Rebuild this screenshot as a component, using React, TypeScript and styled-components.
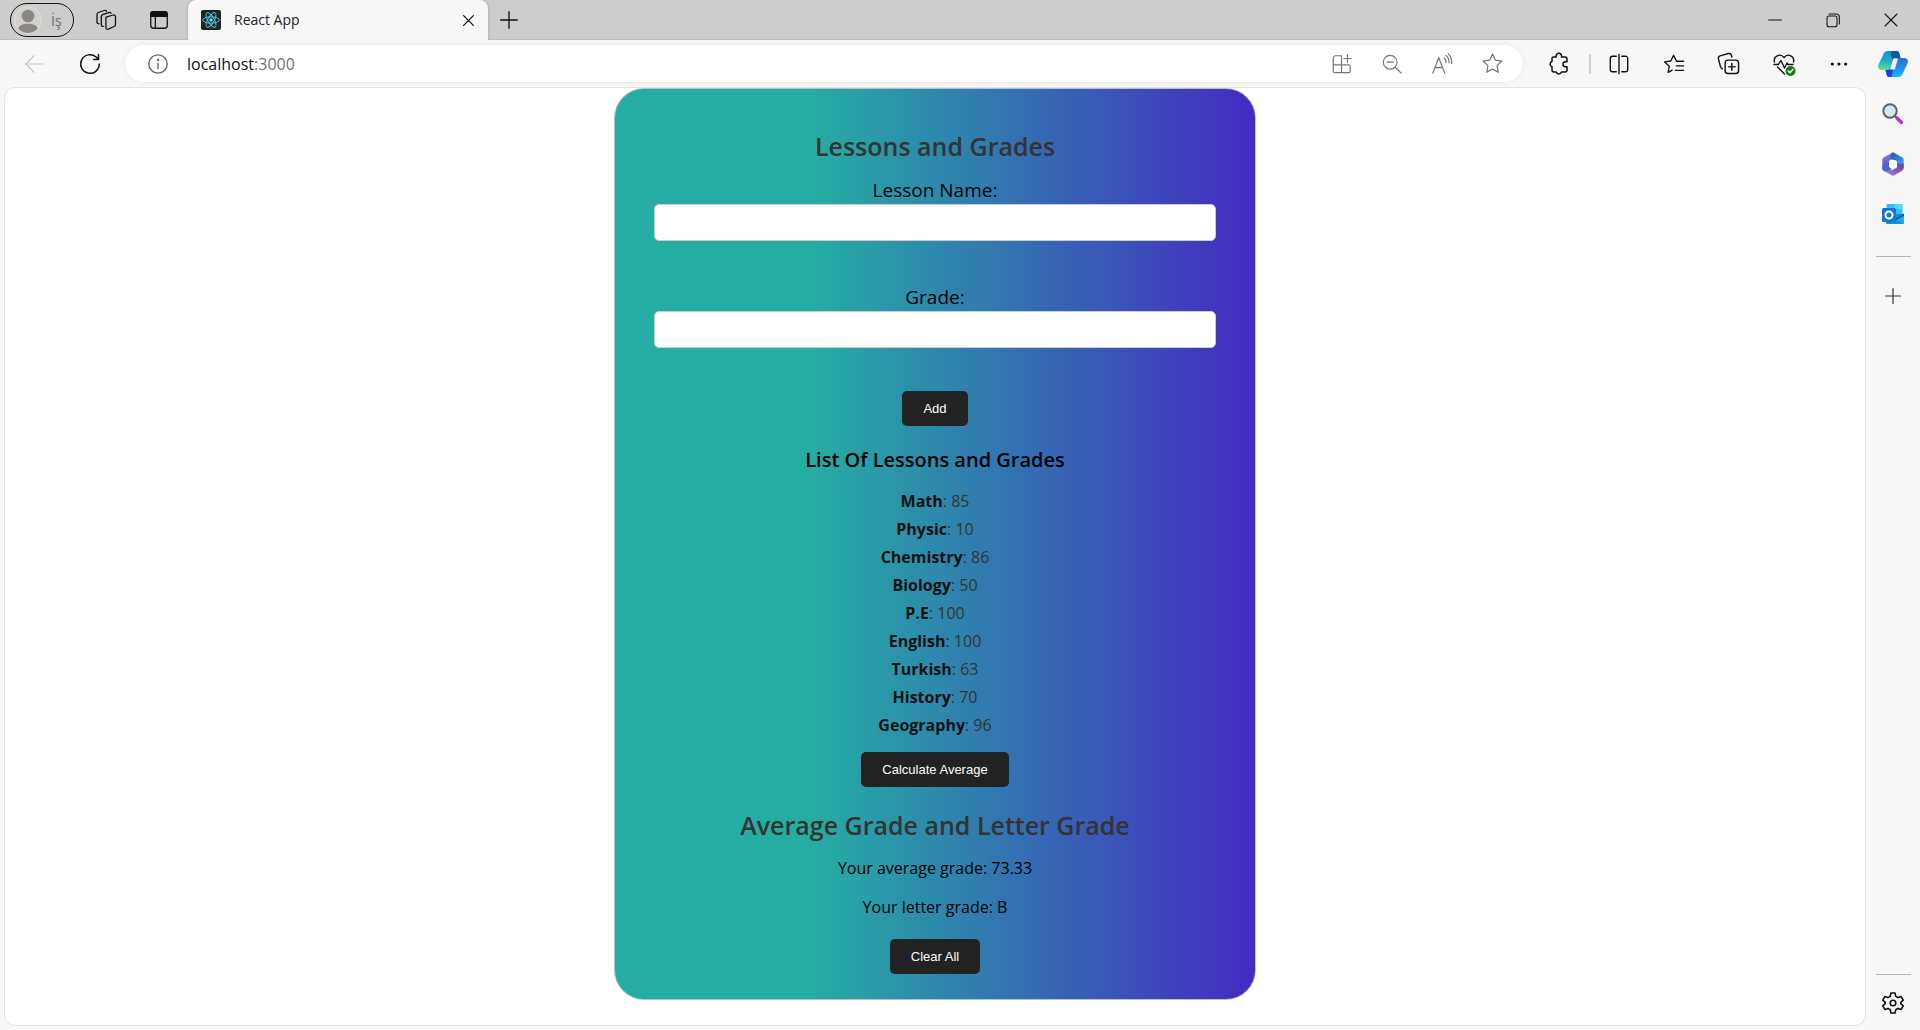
import React, { useState } from "react";
import styled, { createGlobalStyle } from "styled-components";

const uiFont = `"Segoe UI", "Open Sans", "Noto Sans", sans-serif`;
const comicFont = `"Comic Sans MS", "Open Sans", "Noto Sans", sans-serif`;

const GlobalStyle = createGlobalStyle`
  *, *::before, *::after { box-sizing: border-box; }
  body { margin: 0; background: #f7f7f7; font-family: ${uiFont}; }
  svg { display: block; flex: none; }
`;

/* ---------- browser frame ---------- */

const Browser = styled.div`
  min-height: 100vh;
  display: flex;
  flex-direction: column;
`;

const TitleBar = styled.header`
  height: 40px;
  display: flex;
  align-items: center;
  padding-left: 10px;
  background: #cdcdcd;
  box-shadow: inset 0 -1px 0 #bebebe;
`;

const Profile = styled.button`
  width: 64px;
  height: 34px;
  margin-right: 5px;
  padding: 0 0 0 3px;
  display: flex;
  align-items: center;
  gap: 9px;
  border: 1px solid #111;
  border-radius: 17px;
  background: transparent;
  color: #6b6b6b;
  font: 400 14px ${uiFont};
`;

const IconButton = styled.button<{ $w: number; $color?: string }>`
  width: ${(p) => p.$w}px;
  height: 36px;
  padding: 0;
  flex: none;
  display: flex;
  align-items: center;
  justify-content: center;
  border: 0;
  background: transparent;
  color: ${(p) => p.$color ?? "#111"};
`;

const Tab = styled.div`
  width: 300px;
  height: 40px;
  margin-left: 3px;
  padding: 0 5px 0 13px;
  display: flex;
  align-items: center;
  gap: 13px;
  border-radius: 8px 8px 0 0;
  background: #f7f7f7;
  box-shadow: 0 0 3px rgba(0, 0, 0, 0.25);
  clip-path: inset(0 -4px 0 -4px);
`;

const TabTitle = styled.span`
  flex: 1;
  color: #222;
  font-size: 14px;
  line-height: 20px;
`;

const WindowControls = styled.div`
  margin-left: auto;
  display: flex;
`;

const Toolbar = styled.nav`
  height: 47px;
  display: flex;
  align-items: center;
  padding-left: 7px;
  background: #f7f7f7;
`;

const AddressBar = styled.div`
  flex: 1;
  height: 37px;
  margin: 0 8px 0 8px;
  padding: 0 6px 0 8px;
  display: flex;
  align-items: center;
  border-radius: 19px;
  background: #fff;
  box-shadow: 0 0 4px rgba(0, 0, 0, 0.08);
`;

const Address = styled.span`
  flex: 1;
  margin-left: 4px;
  color: #111;
  font-size: 16px;
  line-height: 24px;
`;

const Port = styled.span`
  color: #757575;
`;

const Divider = styled.span`
  width: 2px;
  height: 20px;
  margin-left: 3px;
  background: #cfcfcf;
`;

const Body = styled.div`
  flex: 1;
  display: flex;
`;

const Viewport = styled.main`
  flex: 1;
  margin: 0 0 4px 4px;
  padding-bottom: 25px;
  border: 1px solid #e4e4e4;
  border-radius: 11px;
  background: #fff;
`;

const SideBar = styled.aside`
  width: 54px;
  padding: 2px 0 9px;
  display: flex;
  flex-direction: column;
  align-items: center;
`;

const SideSlot = styled.div`
  height: 50px;
  display: flex;
  align-items: center;
`;

const SideRule = styled.hr<{ $bottom?: boolean }>`
  width: 35px;
  height: 1px;
  margin: ${(p) => (p.$bottom ? "auto 0 10px" : "17px 0 14px")};
  border: 0;
  background: #b5b5b5;
`;

/* ---------- lesson card ---------- */

const Card = styled.section`
  max-width: 642px;
  margin: 0 auto;
  padding: 39px 39px 25px;
  border: 1px solid #bcbfc6;
  border-radius: 30px;
  background: linear-gradient(90deg, #25ada3 31%, #442dc2 98%) border-box;
  color: #000;
  font-family: ${comicFont};
  text-align: center;
`;

const Heading = styled.h2`
  margin: 0 0 13px;
  color: #333;
  font-size: 25px;
  font-weight: 600;
  line-height: 36px;
`;

const SubHeading = styled.h3`
  margin: 20px 0 13px;
  font-size: 20px;
  font-weight: 600;
  line-height: 28px;
`;

const Form = styled.form`
  display: flex;
  flex-direction: column;
  align-items: center;
  gap: 43px;
`;

const Field = styled.div`
  width: 100%;
`;

const Label = styled.label`
  display: block;
  font-size: 19px;
  line-height: 27px;
`;

const TextInput = styled.input`
  display: block;
  width: 100%;
  height: 37px;
  padding: 8px;
  border: 1px solid #ccc;
  border-radius: 5px;
  background: #fff;
  font: 14px "Liberation Sans", Arial, sans-serif;
`;

const Button = styled.button`
  height: 35px;
  padding: 0 21px;
  border: 0;
  border-radius: 5px;
  background: #222;
  color: #fff;
  font: 13px "Liberation Sans", Arial, sans-serif;
`;

const List = styled.ul`
  margin: 0 0 13px;
  padding: 0;
  list-style: none;
`;

const Row = styled.li`
  color: #333;
  font-size: 16px;
  line-height: 28px;
`;

const Lesson = styled.strong`
  color: #111;
  font-weight: 700;
`;

const Result = styled.section`
  margin-top: 20px;
`;

const Line = styled.p<{ $last?: boolean }>`
  margin: 0 0 ${(p) => (p.$last ? 20 : 15)}px;
  font-size: 16px;
  line-height: 24px;
`;

/* ---------- icons ---------- */

const Icon = ({ size = 22, w = 1.3, children }: { size?: number; w?: number; children: React.ReactNode }) => (
  <svg width={size} height={size} viewBox="0 0 24 24" fill="none" stroke="currentColor" strokeWidth={w} strokeLinecap="round" strokeLinejoin="round" aria-hidden="true">
    {children}
  </svg>
);

const Avatar = () => (
  <svg width="28" height="28" viewBox="0 0 28 28" aria-hidden="true">
    <circle cx="14" cy="14" r="13.3" fill="#d3d1ce" stroke="#e2e0dd" />
    <circle cx="14" cy="10" r="6.3" fill="#8b8784" />
    <path d="M4.2 22.5C5 19.5 8.5 17.8 14 17.8s9 1.7 9.8 4.7A13 13 0 0 1 4.2 22.5z" fill="#8b8784" />
  </svg>
);

const Workspaces = () => (
  <Icon size={24} w={1.3}>
    <path d="M12.200 9.200l6.800-2.200c1.300-.4 2.500.4 2.500 1.700v7.800c0 1-.5 1.700-1.400 2l-5.800 2.700c-1.200.4-2.400-.3-2.400-1.600v-8.700c0-.8-.3-1.400.3-1.700z" />
    <path d="M9.300 18.300c-1.300.1-2-.6-2-1.700V8.700c0-1 .5-1.700 1.400-2l6-2.100c1-.3 1.900 0 2.300.7" />
    <path d="M5 15.800c-1.300 0-2-.7-2-1.700V6.500c0-1 .5-1.700 1.400-2l5.800-2c1-.3 1.900 0 2.300.7" />
  </Icon>
);

const TabPanel = () => (
  <Icon size={22} w={1.4}>
    <rect x="3" y="3" width="18" height="18" rx="3" />
    <path d="M3 8V6a3 3 0 0 1 3-3h12a3 3 0 0 1 3 3v2z" fill="currentColor" />
    <path d="M8 8v13" />
  </Icon>
);

const ReactIcon = () => (
  <svg width="20" height="20" viewBox="0 0 20 20" aria-hidden="true">
    <rect width="20" height="20" rx="2" fill="#222" />
    <g fill="none" stroke="#53c1de" strokeWidth="1">
      <ellipse cx="10" cy="10" rx="8.3" ry="3.2" />
      <ellipse cx="10" cy="10" rx="8.3" ry="3.2" transform="rotate(60 10 10)" />
      <ellipse cx="10" cy="10" rx="8.3" ry="3.2" transform="rotate(120 10 10)" />
    </g>
    <circle cx="10" cy="10" r="1.7" fill="#61dafb" />
  </svg>
);

const Cross = ({ size = 13, w = 2.4 }) => (
  <Icon size={size} w={w}><path d="M3 3l18 18M21 3L3 21" /></Icon>
);
const Plus = ({ size = 20, w = 1.6 }) => (
  <Icon size={size} w={w}><path d="M12 2v20M2 12h20" /></Icon>
);
const Minimize = () => <Icon size={14} w={1.8}><path d="M1 12h22" /></Icon>;
const Restore = () => (
  <Icon size={16} w={1.6}>
    <rect x="3" y="6" width="15" height="16" rx="3" />
    <path d="M6 3h11a4.5 4.5 0 0 1 4.5 4.5V18" />
  </Icon>
);
const Back = () => <Icon size={22}><path d="M22 12H2.5M11 3l-9 9 9 9" /></Icon>;
const Reload = () => (
  <Icon size={24} w={1.5}><path d="M21.3 12a9.3 9.3 0 1 1-3.200-7l2.200 2.200M20.500 2.500v5h-5" /></Icon>
);
const Info = () => (
  <Icon size={22} w={1.5}>
    <circle cx="12" cy="12" r="10" />
    <path d="M12 11v6" />
    <circle cx="12" cy="7.5" r=".6" fill="currentColor" />
  </Icon>
);
const Apps = () => (
  <Icon>
    <path d="M11.5 3H5a2.500 2.500 0 0 0-2.500 2.500V20A1.500 1.500 0 0 0 4 21.500h15.500a1.500 1.500 0 0 0 1.500-1.500v-5.500a1.500 1.500 0 0 0-1.500-1.500h-17M11.500 3v18.500M18 2v8M14 6h8" />
  </Icon>
);
const ZoomOut = () => (
  <Icon><circle cx="10" cy="10" r="7.5" /><path d="M15.5 15.5L22 22M6.5 10h7" /></Icon>
);
const ReadAloud = () => (
  <Icon>
    <path d="M2 22L8.500 5 15 22M4.500 16h8M14.500 5.500c1.400 1.400 2 3 2 5M16.500 2.800c2.400 2 3.400 4.500 3.200 8M18.800 1c3 2.700 4.200 6 3.700 10.500" />
  </Icon>
);
const Star = () => (
  <Icon size={23}><path d="M12 2.200l3 6.300 6.800.9-5 4.800 1.200 7-6-3.400-6 3.400 1.200-7-5-4.800 6.800-.9z" /></Icon>
);
const Puzzle = () => (
  <Icon size={24} w={1.5}>
    <path d="M6.500 5H9.200a2.800 2.800 0 1 1 5.300 0H18a2 2 0 0 1 2 2v2.800h-1.500a2.500 2.500 0 1 0 0 5H20V18a2 2 0 0 1-2 2h-3.500a2.800 2.800 0 0 1-5.300 0H7a2 2 0 0 1-2-2v-3.200a2.800 2.800 0 0 1 0-5.300V6.500A1.500 1.500 0 0 1 6.500 5z" />
  </Icon>
);
const Split = () => (
  <Icon w={1.5}><path d="M9 3.500H5A2.500 2.500 0 0 0 2.500 6v12A2.500 2.500 0 0 0 5 20.500h4M15 3.500h4A2.500 2.500 0 0 1 21.500 6v12a2.500 2.500 0 0 1-2.500 2.500h-4M12 1.500v21" /></Icon>
);
const Favorites = () => (
  <Icon w={1.5}>
    <path d="M22.500 9h-7.700L11.500 2.500 8.500 8.700l-6.700 1 5 4.700-1.200 6.800 4.400-2.500M14.500 14h8M13.500 19h9" />
  </Icon>
);
const Collections = () => (
  <Icon size={23} w={1.5}>
    <rect x="8.5" y="8.500" width="14" height="14" rx="3" />
    <path d="M15.500 12v7M12 15.500h7M5.500 17.500c-1-.3-1.500-1-1.800-2L1.500 7.200c-.3-1.500.4-2.800 1.800-3.200l8.500-2.400c1.500-.4 2.800.4 3.200 1.800l.5 2" />
  </Icon>
);
const Heart = () => (
  <Icon size={24} w={1.4}>
    <path d="M2.500 10C1 4.500 8 .5 12 5.500 16 .5 23 4.500 21.500 10M5.500 15l7 7" />
    <path d="M2 12.500h4.500L9 8.500l3.500 7.500 2.500-5 1 1.500h5" />
    <circle cx="18.500" cy="19" r="5" fill="#107c10" stroke="none" />
    <path d="M16.200 19l1.700 1.700 3-3.200" stroke="#fff" />
  </Icon>
);
const Dots = () => (
  <Icon size={20}>
    <g fill="currentColor" stroke="none">
      <circle cx="4" cy="12" r="1.900" /><circle cx="12" cy="12" r="1.900" /><circle cx="20" cy="12" r="1.900" />
    </g>
  </Icon>
);
const Gear = () => (
  <Icon size={24} w={1.6}>
    <circle cx="12" cy="12" r="2.800" />
    <path d="M10 2h4l.7 3.200 2.300 1.400 3.200-1 2 3.500L19.800 11.300v1.400l2.400 2.200-2 3.500-3.200-1-2.300 1.400L14 22h-4l-.7-3.200L7 17.400l-3.200 1-2-3.500 2.400-2.200v-1.400L1.800 9.100l2-3.500 3.200 1 2.300-1.400z" />
  </Icon>
);

const Copilot = () => (
  <svg width="30" height="28" viewBox="0 0 30 28" aria-hidden="true">
    <defs>
      <linearGradient id="cpA" x1="0" y1="0" x2="0" y2="1">
        <stop offset="0" stopColor="#0a93d2" /><stop offset=".5" stopColor="#1fadc4" /><stop offset="1" stopColor="#5fe08c" />
      </linearGradient>
      <linearGradient id="cpB" x1="0" y1="0" x2="0" y2="1">
        <stop offset="0" stopColor="#2e6ade" /><stop offset="1" stopColor="#16b4fb" />
      </linearGradient>
    </defs>
    <path d="M5.500 4C6.300 2 7.700 1 10 1h8c2 0 3 .8 3.400 2.500L22.500 8h-4c-2 0-3.200 1-3.800 3l-2 6c-.6 2-1.900 3-4 3H4c-3 0-4.500-2-3.700-5z" fill="url(#cpA)" />
    <path d="M14 1h4c2 0 3 .8 3.400 2.500L22.500 8h-4c-1.700 0-2.800.7-3.500 2.200L12.500 4z" fill="#0a5c92" />
    <path d="M24.500 24c-.8 2-2.200 3-4.500 3h-8c-2 0-3-.8-3.400-2.500L7.500 20h1.200c2.100 0 3.400-1 4-3l2-6c.6-2 1.800-3 3.800-3H26c3 0 4.500 2 3.700 5z" fill="url(#cpB)" />
    <path d="M7.500 20h1.200c2.100 0 3.400-1 4-3l2.300 3-1.500 7H12c-2 0-3-.8-3.400-2.500z" fill="#1743d6" />
    <path d="M15.500 8.500h4.500l-3.300 11h-5.200c.7-.6 1.100-1.400 1.400-2.500l1.900-6c.2-1 .3-1.800.7-2.500z" fill="#f7fbff" />
  </svg>
);

const SearchColor = () => (
  <svg width="22" height="22" viewBox="0 0 22 22" aria-hidden="true">
    <path d="M13 13l3 3" stroke="#555" strokeWidth="2" />
    <path d="M15 15l4.500 4.500" stroke="#b52ee8" strokeWidth="3.500" strokeLinecap="round" />
    <circle cx="8" cy="8" r="6.700" fill="#cfe8f8" stroke="#616161" strokeWidth="2" />
  </svg>
);

const Microsoft365 = () => (
  <svg width="22" height="24" viewBox="0 0 22 24" aria-hidden="true">
    <defs>
      <linearGradient id="msA" x1="0" y1="0" x2="0" y2="1">
        <stop offset="0" stopColor="#a66fce" /><stop offset="1" stopColor="#4a56c8" />
      </linearGradient>
      <linearGradient id="msB" x1="0" y1="0" x2="1" y2="1">
        <stop offset="0" stopColor="#2456b8" /><stop offset="1" stopColor="#38b6f0" />
      </linearGradient>
      <linearGradient id="msC" x1="0" y1="1" x2="1" y2="0">
        <stop offset="0" stopColor="#a985df" /><stop offset="1" stopColor="#693c94" />
      </linearGradient>
    </defs>
    <path d="M9.500 1L2 5.300C.8 6 .3 7 .3 8v8c0 1.500.5 2.200 1.700 3l5 .5V9l5-4z" fill="url(#msA)" />
    <path d="M9.500 1C10.500.4 11.500.4 12.500 1L20 5.300c1.200.7 1.700 1.700 1.700 2.700v8L15 12.500V9L8 7z" fill="url(#msB)" />
    <path d="M2 19l7.500 4.200c1 .6 2 .6 3 0L20 18.700c1.200-.7 1.700-1.700 1.700-2.700v-4.500L15 12v3.500l-5 2.500z" fill="url(#msC)" />
    <path d="M.3 14v2c0 2 1.200 3 3 3 2 .2 4-.4 6.500-2L7 15V9z" fill="#4668d0" />
    <circle cx="11" cy="12" r="4" fill="#fff" />
  </svg>
);

const Outlook = () => (
  <svg width="22" height="22" viewBox="0 0 22 22" aria-hidden="true">
    <rect x="4.500" y="1" width="16" height="12" rx="1" fill="#38bdf2" />
    <path d="M4.500 5h8v6h-8z" fill="#0f6cbd" />
    <path d="M12.500 1h7a1 1 0 0 1 1 1v4h-8z" fill="#50d9ff" />
    <path d="M4 11h18v9a1 1 0 0 1-1 1H5a1 1 0 0 1-1-1z" fill="#1490df" />
    <path d="M22 10.500v10L12 16z" fill="#28a8ea" />
    <path d="M12 16l10-5.500V13l-8 4z" fill="#0a5da8" />
    <rect x="0" y="5" width="14" height="14" rx="1.500" fill="#0f78d4" />
    <circle cx="7" cy="12" r="3.500" fill="none" stroke="#fff" strokeWidth="2" />
  </svg>
);

/* ---------- data ---------- */

const lessons: [string, number][] = [
  ["Math", 85],
  ["Physic", 10],
  ["Chemistry", 86],
  ["Biology", 50],
  ["P.E", 100],
  ["English", 100],
  ["Turkish", 63],
  ["History", 70],
  ["Geography", 96],
];

const addressActions: [string, React.FC][] = [
  ["App available", Apps],
  ["Zoom", ZoomOut],
  ["Read aloud", ReadAloud],
  ["Add to favorites", Star],
];

const toolbarActions: [string, React.FC][] = [
  ["Split screen", Split],
  ["Favorites", Favorites],
  ["Collections", Collections],
  ["Browser essentials", Heart],
  ["Settings and more", Dots],
];

const LessonCard = () => {
  const [name, setName] = useState("");
  const [grade, setGrade] = useState("");
  const average = lessons.reduce((sum, [, g]) => sum + g, 0) / lessons.length;

  return (
    <Card>
      <Heading>Lessons and Grades</Heading>
      <Form onSubmit={(e) => e.preventDefault()}>
        <Field>
          <Label htmlFor="lesson">Lesson Name:</Label>
          <TextInput id="lesson" type="text" value={name} onChange={(e) => setName(e.target.value)} />
        </Field>
        <Field>
          <Label htmlFor="grade">Grade:</Label>
          <TextInput id="grade" type="text" value={grade} onChange={(e) => setGrade(e.target.value)} />
        </Field>
        <Button type="submit">Add</Button>
      </Form>
      <SubHeading>List Of Lessons and Grades</SubHeading>
      <List>
        {lessons.map(([lesson, g]) => (
          <Row key={lesson}>
            <Lesson>{lesson}</Lesson>: {g}
          </Row>
        ))}
      </List>
      <Button type="button">Calculate Average</Button>
      <Result>
        <Heading>Average Grade and Letter Grade</Heading>
        <Line>Your average grade: {average.toFixed(2)}</Line>
        <Line $last>Your letter grade: B</Line>
      </Result>
      <Button type="button">Clear All</Button>
    </Card>
  );
};

export default function App() {
  return (
    <Browser>
      <GlobalStyle />
      <TitleBar>
        <Profile type="button"><Avatar />İş</Profile>
        <IconButton $w={53} aria-label="Workspaces"><Workspaces /></IconButton>
        <IconButton $w={53} aria-label="Tab actions"><TabPanel /></IconButton>
        <Tab>
          <ReactIcon />
          <TabTitle>React App</TabTitle>
          <IconButton $w={30} aria-label="Close tab"><Cross /></IconButton>
        </Tab>
        <IconButton $w={42} aria-label="New tab"><Plus /></IconButton>
        <WindowControls>
          <IconButton $w={58} aria-label="Minimize"><Minimize /></IconButton>
          <IconButton $w={58} aria-label="Restore"><Restore /></IconButton>
          <IconButton $w={58} aria-label="Close"><Cross size={16} w={1.6} /></IconButton>
        </WindowControls>
      </TitleBar>
      <Toolbar>
        <IconButton $w={55} $color="#c8c8c8" aria-label="Back"><Back /></IconButton>
        <IconButton $w={55} aria-label="Refresh"><Reload /></IconButton>
        <AddressBar>
          <IconButton $w={50} $color="#666" aria-label="Site information"><Info /></IconButton>
          <Address>localhost<Port>:3000</Port></Address>
          {addressActions.map(([label, Glyph]) => (
            <IconButton key={label} $w={50} $color="#757575" aria-label={label}><Glyph /></IconButton>
          ))}
        </AddressBar>
        <IconButton $w={55} aria-label="Extensions"><Puzzle /></IconButton>
        <Divider />
        {toolbarActions.map(([label, Glyph]) => (
          <IconButton key={label} $w={55} aria-label={label}><Glyph /></IconButton>
        ))}
        <IconButton $w={54} aria-label="Copilot"><Copilot /></IconButton>
      </Toolbar>
      <Body>
        <Viewport><LessonCard /></Viewport>
        <SideBar>
          <SideSlot><IconButton $w={40} aria-label="Search"><SearchColor /></IconButton></SideSlot>
          <SideSlot><IconButton $w={40} aria-label="Microsoft 365"><Microsoft365 /></IconButton></SideSlot>
          <SideSlot><IconButton $w={40} aria-label="Outlook"><Outlook /></IconButton></SideSlot>
          <SideRule />
          <SideSlot><IconButton $w={40} $color="#333" aria-label="Customize"><Plus size={18} w={1.6} /></IconButton></SideSlot>
          <SideRule $bottom />
          <IconButton $w={40} aria-label="Settings"><Gear /></IconButton>
        </SideBar>
      </Body>
    </Browser>
  );
}
